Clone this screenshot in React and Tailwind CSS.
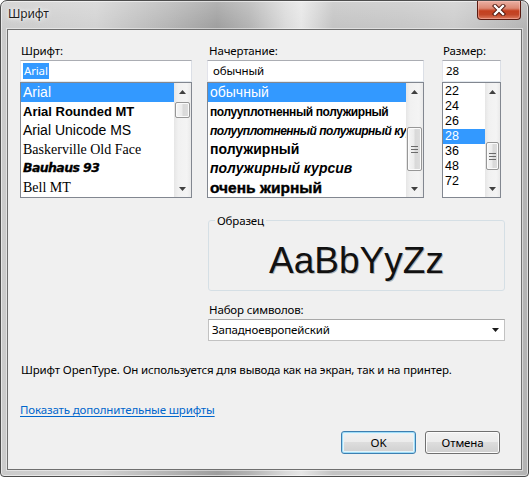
import React from "react";

const UI = "font-['Noto_Sans',sans-serif]";
const ARIAL = "font-['Liberation_Sans',Arial,sans-serif]";
const SERIF = "font-['Liberation_Serif','Times_New_Roman',serif]";

function Arrow({ dir }) {
  return (
    <svg width="7" height="4" viewBox="0 0 7 4">
      {dir === "up" ? (
        <path d="M0 4 L3.5 0 L7 4 Z" fill="#404040" />
      ) : (
        <path d="M0 0 L3.5 4 L7 0 Z" fill="#404040" />
      )}
    </svg>
  );
}

function Grip() {
  return (
    <svg width="7" height="7" viewBox="0 0 7 7">
      <rect x="0" y="0" width="7" height="1" fill="#6b6b6b" />
      <rect x="0" y="3" width="7" height="1" fill="#6b6b6b" />
      <rect x="0" y="6" width="7" height="1" fill="#6b6b6b" />
    </svg>
  );
}

function ScrollBar({ before, thumb, grip, width }) {
  return (
    <div
      className={`${width} h-full shrink-0 flex flex-col bg-[linear-gradient(90deg,#e6e6e6,#f1f1f1_25%,#f4f4f4_75%,#eaeaea)]`}
    >
      <div className="h-[17px] shrink-0 flex items-center justify-center">
        <Arrow dir="up" />
      </div>
      <div className={`${before} shrink-0`} />
      <div
        className={`${thumb} shrink-0 mx-[1px] rounded-[2px] border border-[#979797] bg-[linear-gradient(90deg,#f6f6f6,#ececec_45%,#d9d9d9_55%,#dedede)] shadow-[inset_0_0_0_1px_#fbfbfb] flex items-center justify-center`}
      >
        {grip && <Grip />}
      </div>
      <div className="flex-1" />
      <div className="h-[17px] shrink-0 flex items-center justify-center">
        <Arrow dir="down" />
      </div>
    </div>
  );
}

function TextBox({ children }) {
  return (
    <div className="h-[22px] border border-[#abadb3] border-l-[#e2e3ea] border-r-[#dbdfe6] border-b-[#e3e9ef] bg-white flex items-center pl-[2px] overflow-hidden whitespace-nowrap">
      {children}
    </div>
  );
}

function Row({ sel, h, cls, children }) {
  return (
    <div
      className={`${h} shrink-0 flex items-center pl-[2px] whitespace-nowrap overflow-hidden ${
        sel ? "bg-[#3399ff] text-white" : "text-black"
      } ${cls}`}
    >
      {children}
    </div>
  );
}

function Button({ def, children }) {
  return (
    <div
      className={`w-[75px] h-[23px] rounded-[3px] border flex items-center justify-center ${
        def
          ? "border-[#3c7fb1] shadow-[inset_0_0_0_1px_#9fdcf7,inset_0_0_0_2px_#e4f4fb]"
          : "border-[#707070] shadow-[inset_0_0_0_1px_#fcfcfc]"
      } bg-[linear-gradient(180deg,#f2f2f2_0%,#ebebeb_50%,#dddddd_50%,#cfcfcf_100%)]`}
    >
      {children}
    </div>
  );
}

function CloseButton() {
  return (
    <div className="w-[44px] h-[19px] rounded-b-[4px] border border-t-0 border-[#5a1a10] bg-[linear-gradient(180deg,#eab0a3_0%,#dc8873_40%,#c4401f_55%,#c24627_75%,#dc7a5e_100%)] shadow-[inset_0_0_0_1px_rgba(255,200,190,0.45)] flex items-center justify-center">
      <svg width="14" height="12" viewBox="0 0 14 12">
        <path d="M3 2 L11 10 M11 2 L3 10" stroke="#4a1309" strokeWidth="4.2" strokeLinecap="square" />
        <path d="M3 2 L11 10 M11 2 L3 10" stroke="#ffffff" strokeWidth="2.4" strokeLinecap="square" />
      </svg>
    </div>
  );
}

export default function App() {
  return (
    <div className={`w-[529px] h-[477px] bg-white ${UI} text-[11.5px] tracking-[-0.15px] text-black`}>
      <div className="w-full h-full flex flex-col rounded-t-[7px] rounded-b-[4px] border border-[#4d4d4d] shadow-[inset_0_0_0_1px_rgba(255,255,255,0.55)] bg-[linear-gradient(180deg,rgba(255,255,255,0.22),rgba(255,255,255,0)_6%),linear-gradient(90deg,#cbcbcb_0%,#d2d2d2_18%,#b4b4b4_32%,#9e9e9e_41%,#b2b2b2_47%,#dadada_54%,#e6e6e6_57%,#c3c3c3_63%,#c6c6c6_76%,#cccccc_86%,#b3b3b3_100%)] overflow-hidden">
        {/* title bar */}
        <div className="h-[28px] shrink-0 flex items-start">
          <span className="ml-[7px] mt-[5px] leading-[16px] text-[12px] text-[#1e1e1e] [text-shadow:0_0_6px_#ffffff,0_0_3px_#ffffff]">
            Шрифт
          </span>
          <div className="ml-auto mr-[7px]">
            <CloseButton />
          </div>
        </div>

        {/* client */}
        <div className="flex-1 mx-[6px] mb-[6px] border border-[#6f6f6f] bg-[#f0f0f0] flex flex-col shadow-[0_0_0_1px_rgba(255,255,255,0.45)]">
          {/* top row */}
          <div className="flex pt-[13px]">
            {/* font column */}
            <div className="ml-[12px] w-[172px] flex flex-col">
              <div className="h-[17px] leading-[15px] pl-px">Шрифт:</div>
              <TextBox>
                <span className="bg-[#3399ff] text-white leading-[16px] px-px">Arial</span>
              </TextBox>
              <div className="h-[116px] border border-[#828790] bg-white flex tracking-normal">
                <div className="flex-1 flex flex-col overflow-hidden">
                  <Row sel h="h-[19px]" cls={`${ARIAL} text-[14px]`}>Arial</Row>
                  <Row h="h-[19px]" cls={`${ARIAL} text-[13px] font-bold`}>Arial Rounded MT</Row>
                  <Row h="h-[19px]" cls={`${ARIAL} text-[14px]`}>Arial Unicode MS</Row>
                  <Row h="h-[19px]" cls={`${SERIF} text-[14px]`}>Baskerville Old Face</Row>
                  <Row h="h-[19px]" cls="font-['DejaVu_Sans',sans-serif] text-[12.5px] font-bold italic tracking-[-0.6px] [-webkit-text-stroke:0.3px_#000]">Bauhaus 93</Row>
                  <Row h="h-[19px]" cls={`${SERIF} text-[14px]`}>Bell MT</Row>
                </div>
                <ScrollBar width="w-[17px]" before="h-[2px]" thumb="h-[16px]" />
              </div>
            </div>

            {/* style column */}
            <div className="ml-[15px] w-[217px] flex flex-col">
              <div className="h-[17px] leading-[15px] pl-[2px]">Начертание:</div>
              <TextBox>
                <span className="pl-[3px]">обычный</span>
              </TextBox>
              <div className="h-[116px] border border-[#828790] bg-white flex tracking-normal">
                <div className="flex-1 flex flex-col overflow-hidden">
                  <Row sel h="h-[19px]" cls={`${ARIAL} text-[14px]`}>обычный</Row>
                  <Row h="h-[19px]" cls={`${ARIAL} text-[12px] font-bold tracking-[-0.4px]`}>полууплотненный полужирный</Row>
                  <Row h="h-[19px]" cls={`${ARIAL} text-[12px] font-bold italic tracking-[-0.5px]`}>полууплотненный полужирный курсив</Row>
                  <Row h="h-[19px]" cls={`${ARIAL} text-[14px] font-bold`}>полужирный</Row>
                  <Row h="h-[19px]" cls={`${ARIAL} text-[14px] font-bold italic`}>полужирный курсив</Row>
                  <Row h="h-[19px]" cls={`${ARIAL} text-[15.5px] font-bold [-webkit-text-stroke:0.4px_#000]`}>очень жирный</Row>
                </div>
                <ScrollBar width="w-[17px]" before="h-[27px]" thumb="h-[44px]" grip />
              </div>
            </div>

            {/* size column */}
            <div className="ml-[18px] w-[59px] flex flex-col">
              <div className="h-[17px] leading-[15px] pl-px">Размер:</div>
              <TextBox>
                <span className="pl-px">28</span>
              </TextBox>
              <div className="h-[116px] border border-[#828790] bg-white flex">
                <div className="flex-1 flex flex-col overflow-hidden pt-px">
                  {["22", "24", "26", "28", "36", "48", "72"].map((s) => (
                    <Row key={s} sel={s === "28"} h="h-[15px]" cls={`${ARIAL} text-[12.5px] leading-[15px] tracking-normal`}>
                      {s}
                    </Row>
                  ))}
                </div>
                <ScrollBar width="w-[15px]" before="h-[42px]" thumb="h-[28px]" grip />
              </div>
            </div>
          </div>

          {/* sample + charset */}
          <div className="ml-[200px] w-[297px] flex flex-col mt-[15px]">
            <fieldset className="border border-[#d5dfe5] rounded-[3px] h-[78px] flex flex-col">
              <legend className="ml-[6px] px-[2px] leading-[15px]">Образец</legend>
              <div className="flex justify-center pt-[15px]">
                <span className={`${ARIAL} text-[37px] leading-[36px] tracking-normal text-[#111] [text-shadow:1px_1px_0_rgba(0,0,0,0.25)]`}>
                  AaBbYyZz
                </span>
              </div>
            </fieldset>
            <div className="mt-[11px] h-[17px] leading-[15px] pl-px">Набор символов:</div>
            <div className="h-[22px] border border-[#c2c2c2] border-t-[#a8a8a8] bg-white flex items-center pl-[3px]">
              <span className="flex-1">Западноевропейский</span>
              <span className="mr-[5px] flex items-center">
                <svg width="7" height="4" viewBox="0 0 7 4">
                  <path d="M0 0 L3.5 4 L7 0 Z" fill="#1a1a1a" />
                </svg>
              </span>
            </div>
          </div>

          {/* description */}
          <div className="ml-[13px] mt-[21px] leading-[15px]">
            Шрифт OpenType. Он используется для вывода как на экран, так и на принтер.
          </div>

          {/* link */}
          <div className="ml-[12px] mt-[25px] leading-[15px]">
            <span className="text-[#0066cc] underline underline-offset-[2px]">Показать дополнительные шрифты</span>
          </div>

          {/* buttons */}
          <div className="mt-[14px] flex justify-end gap-[9px] mr-[21px]">
            <Button def>OK</Button>
            <Button>Отмена</Button>
          </div>
        </div>
      </div>
    </div>
  );
}
